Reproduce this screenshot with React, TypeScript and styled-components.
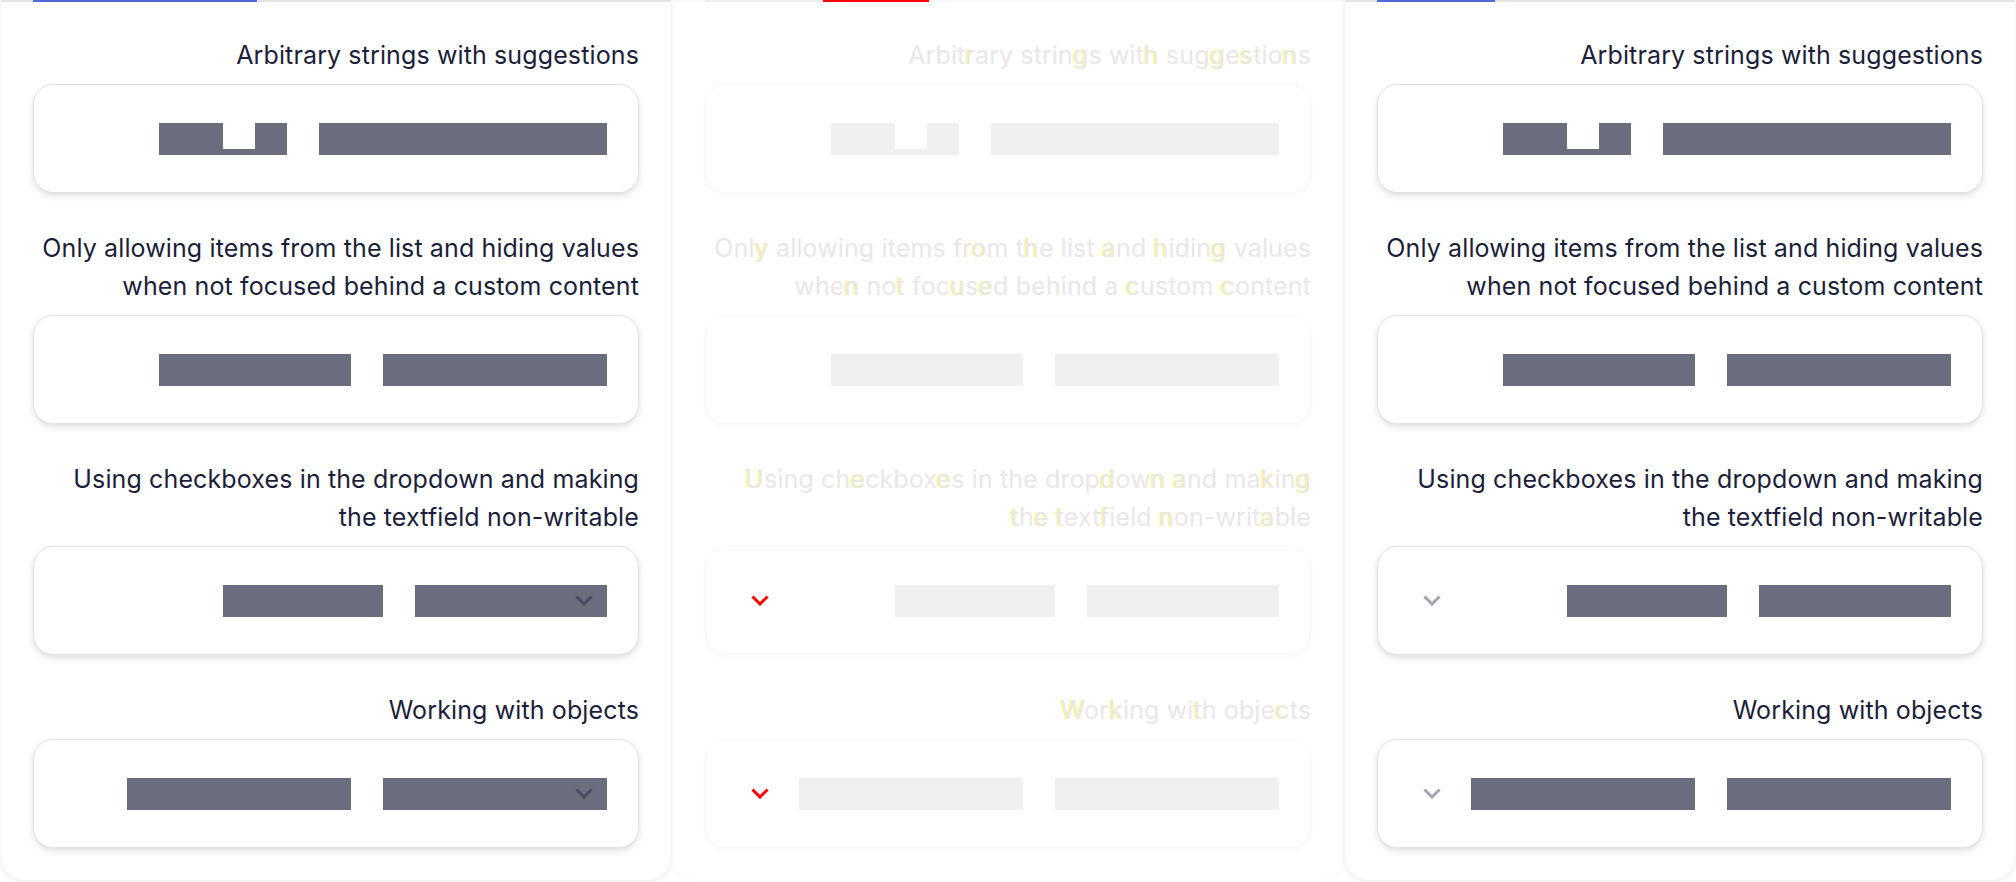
import React from "react";
import styled, { createGlobalStyle, css } from "styled-components";

const Global = createGlobalStyle`
  html, body { margin: 0; padding: 0; background: #ffffff; }
  body { font-family: "Inter", "Lato", sans-serif; }
  * { box-sizing: border-box; }
`;

type Mode = "left" | "diff" | "right";

const Page = styled.div`
  display: grid;
  grid-template-columns: repeat(3, 672px);
  width: 2016px;
  height: 882px;
  overflow: hidden;
  background: #ffffff;
`;

const Panel = styled.section<{ $mode: Mode }>`
  height: 880px;
  display: flex;
  flex-direction: column;
  background: #ffffff;
  border-radius: 0 0 24px 24px;
  box-shadow: ${(p) =>
    p.$mode === "diff" ? "0 1px 6px rgba(0,0,0,0.025)" : "0 1px 6px rgba(0,0,0,0.09)"};
  margin: 0 1px;
`;

const TabLine = styled.div<{ $base: string }>`
  display: flex;
  height: 2px;
  background: ${(p) => p.$base};
`;

const TabSeg = styled.div<{ $color: string; $w: number; $ml: number }>`
  height: 2px;
  width: ${(p) => p.$w}px;
  margin-left: ${(p) => p.$ml}px;
  background: ${(p) => p.$color};
`;

const Content = styled.div`
  display: flex;
  flex-direction: column;
  gap: 36px;
  padding: 34px 32px 0 32px;
`;

const Section = styled.div`
  display: flex;
  flex-direction: column;
  gap: 10px;
`;

const Title = styled.div<{ $mode: Mode }>`
  text-align: right;
  font-family: "Inter", "Lato", sans-serif;
  font-size: 25px;
  line-height: 38px;
  font-weight: 420;
  color: ${(p) => (p.$mode === "diff" ? "#e8e8e8" : "#1c1e3a")};
  letter-spacing: 0.12px;
  white-space: nowrap;
`;

const Mark = styled.span`
  text-shadow: -1px 0 0 rgba(255, 238, 0, 0.7);
`;

const Card = styled.div<{ $mode: Mode }>`
  height: 109px;
  border-radius: 20px;
  display: flex;
  align-items: center;
  padding: 0 31px 0 45px;
  background: #ffffff;
  ${(p) =>
    p.$mode === "diff"
      ? css`
          border: 1.5px solid #f7f7f7;
          box-shadow: 0 3px 6px rgba(0, 0, 0, 0.02);
        `
      : css`
          border: 1.5px solid #e2e2e4;
          box-shadow: 0 3px 6px rgba(0, 0, 0, 0.12);
        `}
`;

const Bars = styled.div`
  margin-left: auto;
  display: flex;
  gap: 32px;
`;

const Bar = styled.div<{ $mode: Mode; $w: number }>`
  width: ${(p) => p.$w}px;
  height: 32px;
  flex: none;
  display: flex;
  align-items: center;
  justify-content: flex-end;
  padding-right: 14px;
  background: ${(p) => (p.$mode === "diff" ? "#efefef" : "#6b6c7e")};
`;

const NotchBar = styled(Bar)`
  align-items: flex-start;
  justify-content: flex-start;
  padding-right: 0;
`;

const Notch = styled.div`
  width: 32px;
  height: 26px;
  margin-left: 64px;
  background: #ffffff;
`;

const ChevronBox = styled.span<{ $color: string }>`
  display: inline-flex;
  flex: none;
  width: 18px;
  height: 11px;
  color: ${(p) => p.$color};
`;

const Chevron = ({ color }: { color: string }) => (
  <ChevronBox $color={color}>
    <svg width="18" height="11" viewBox="0 0 18 11">
      <polyline
        points="2.5,2.5 9,9 15.5,2.5"
        fill="none"
        stroke="currentColor"
        strokeWidth="3"
        strokeLinecap="square"
        strokeLinejoin="miter"
      />
    </svg>
  </ChevronBox>
);

const titles = [
  ["Arbit[r]ary strin[g]s wit[h] sug[g]e[s]tio[n]s"],
  ["Onl[y] allowing items fr[o]m t[h]e list [a]nd [h]idin[g] values", "whe[n] no[t] foc[u]s[e]d behind a [c]ustom [c]ontent"],
  ["[U]sing ch[e]ckbox[e]s in the drop[d]ow[n] [a]nd ma[k]in[g]", "[t]h[e] [t]ext[f]ield [n]on-writ[a]ble"],
  ["[W]or[k]ing wi[t]h obje[c]ts"],
];

const bars: number[][] = [
  [128, 288],
  [192, 224],
  [160, 192],
  [224, 224],
];

const renderLine = (line: string, marked: boolean) => {
  const parts = line.split(/(\[[^\]]\])/);
  return parts.map((part, k) => {
    if (part.startsWith("[") && part.endsWith("]")) {
      const ch = part.slice(1, -1);
      return marked ? <Mark key={k}>{ch}</Mark> : <React.Fragment key={k}>{ch}</React.Fragment>;
    }
    return <React.Fragment key={k}>{part}</React.Fragment>;
  });
};

const PanelView = ({ mode }: { mode: Mode }) => {
  const tab =
    mode === "left" ? (
      <TabLine $base="#e3e3e3">
        <TabSeg $color="#4e6bd6" $w={224} $ml={32} />
      </TabLine>
    ) : mode === "right" ? (
      <TabLine $base="#e3e3e3">
        <TabSeg $color="#4e6bd6" $w={118} $ml={32} />
      </TabLine>
    ) : (
      <TabLine $base="#f7f7f7">
        <TabSeg $color="#ededed" $w={118} $ml={32} />
        <TabSeg $color="#ff0000" $w={106} $ml={0} />
      </TabLine>
    );
  const chevColor = mode === "diff" ? "#ff0000" : "#a4a4b2";
  return (
    <Panel $mode={mode}>
      {tab}
      <Content>
        {titles.map((lines, i) => {
          const [w1, w2] = bars[i];
          const hasChevron = i >= 2;
          return (
            <Section key={i}>
              <Title $mode={mode}>
                {lines.map((l, j) => (
                  <div key={j}>{renderLine(l, mode === "diff")}</div>
                ))}
              </Title>
              <Card $mode={mode}>
                {hasChevron && mode !== "left" && <Chevron color={chevColor} />}
                <Bars>
                  {i === 0 ? (
                    <NotchBar $mode={mode} $w={w1}>
                      <Notch />
                    </NotchBar>
                  ) : (
                    <Bar $mode={mode} $w={w1} />
                  )}
                  <Bar $mode={mode} $w={w2}>
                    {hasChevron && mode === "left" && <Chevron color="#4a4b62" />}
                  </Bar>
                </Bars>
              </Card>
            </Section>
          );
        })}
      </Content>
    </Panel>
  );
};

export default function App() {
  return (
    <>
      <Global />
      <Page>
        <PanelView mode="left" />
        <PanelView mode="diff" />
        <PanelView mode="right" />
      </Page>
    </>
  );
}
